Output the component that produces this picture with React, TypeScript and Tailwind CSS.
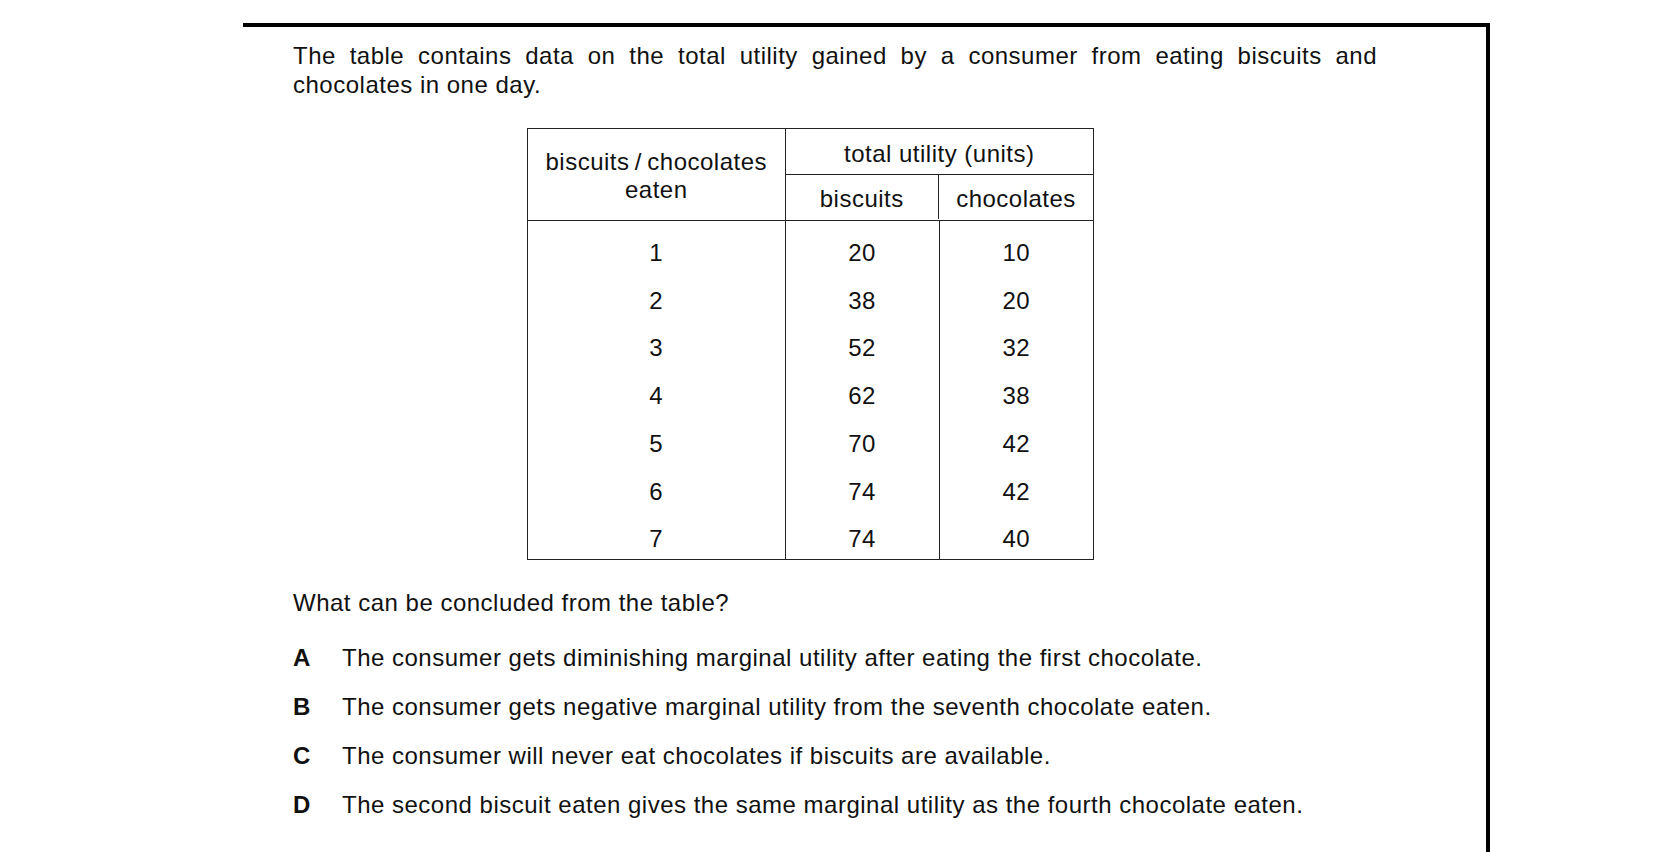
const ROWS: [number, number, number][] = [
  [1, 20, 10],
  [2, 38, 20],
  [3, 52, 32],
  [4, 62, 38],
  [5, 70, 42],
  [6, 74, 42],
  [7, 74, 40],
];

const OPTIONS: [string, string][] = [
  ["A", "The consumer gets diminishing marginal utility after eating the first chocolate."],
  ["B", "The consumer gets negative marginal utility from the seventh chocolate eaten."],
  ["C", "The consumer will never eat chocolates if biscuits are available."],
  ["D", "The second biscuit eaten gives the same marginal utility as the fourth chocolate eaten."],
];

function UtilityTable() {
  return (
    <div className="ml-[234px] mt-[29px] w-[567px] border-[1.5px] border-[#222]">
      <div className="grid grid-cols-[256.5px_1fr] border-b-[1.5px] border-[#222]">
        <div className="flex h-[91px] flex-col items-center justify-center pt-[3px] leading-[28px]">
          <span>biscuits{"\u2009/\u2009"}chocolates</span>
          <span>eaten</span>
        </div>
        <div className="border-l-[1.5px] border-[#222]">
          <div className="flex h-[45.5px] items-center justify-center border-b-[1.5px] border-[#222] pt-[5px]">
            total utility (units)
          </div>
          <div className="grid h-[44px] grid-cols-[152.5px_1fr]">
            <div className="flex items-center justify-center pt-[5px]">biscuits</div>
            <div className="flex items-center justify-center border-l-[1.5px] border-[#222] pt-[5px]">
              chocolates
            </div>
          </div>
        </div>
      </div>
      <div className="grid grid-cols-[256.5px_154px_1fr] pt-[8px]">
        {[0, 1, 2].map((col) => (
          <div
            key={col}
            className={col > 0 ? "-mt-[8px] border-l-[1.5px] border-[#222] pt-[8px]" : ""}
          >
            {ROWS.map((row, i) => (
              <div
                key={i}
                className={
                  i === ROWS.length - 1
                    ? "flex h-[43px] items-start justify-center pt-[9px] leading-[28px]"
                    : "flex h-[47.75px] items-center justify-center"
                }
              >
                {row[col]}
              </div>
            ))}
          </div>
        ))}
      </div>
    </div>
  );
}

export default function App() {
  return (
    <div className="h-[852px] w-[1656px] overflow-hidden bg-white pt-[23px] font-['Liberation_Sans',Arial,sans-serif] text-[24px] leading-[28px] tracking-[0.5px] text-[#111]">
      <div className="ml-[243px] h-[829px] w-[1247px] border-r-4 border-t-4 border-black pl-[50px] pt-[15px]">
        <p className="w-[1084px] text-justify">
          <span className="block [text-align-last:justify]">
            The table contains data on the total utility gained by a consumer from eating biscuits and
          </span>
          <span className="block pt-[1px]">chocolates in one day.</span>
        </p>

        <UtilityTable />

        <p className="mt-[29px]">What can be concluded from the table?</p>

        <div className="mt-[27px] flex flex-col gap-[21px]">
          {OPTIONS.map(([letter, text]) => (
            <div key={letter} className="flex">
              <span className="w-[49px] font-bold">{letter}</span>
              <span>{text}</span>
            </div>
          ))}
        </div>
      </div>
    </div>
  );
}
